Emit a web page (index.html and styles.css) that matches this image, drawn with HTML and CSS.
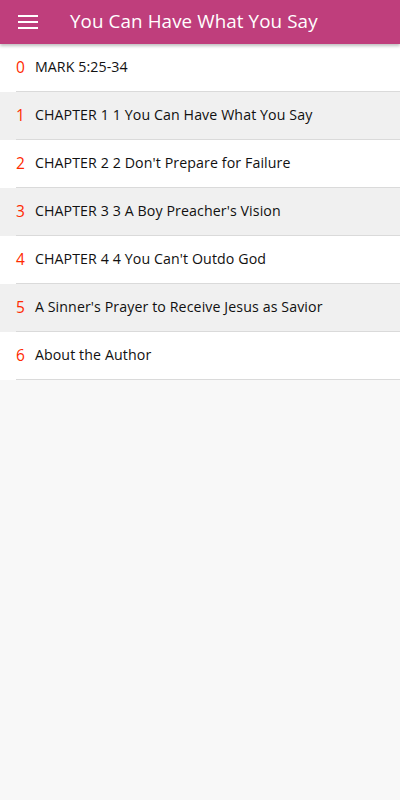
FILE: index.html
```html
<!DOCTYPE html>
<html>
<head>
<meta charset="utf-8">
<link rel="stylesheet" href="styles.css">
</head>
<body>
<header class="appbar">
  <svg class="menu" width="20" height="14" viewBox="0 0 20 14"><rect x="0" y="0" width="20" height="2" fill="#fff"/><rect x="0" y="6" width="20" height="2" fill="#fff"/><rect x="0" y="12" width="20" height="2" fill="#fff"/></svg>
  <h1 class="title">You Can Have What You Say</h1>
</header>
<ul class="list">
  <li class="row"><span class="num">0</span><span class="label">MARK 5:25-34</span></li>
  <li class="row alt"><span class="num">1</span><span class="label">CHAPTER 1 1 You Can Have What You Say</span></li>
  <li class="row"><span class="num">2</span><span class="label">CHAPTER 2 2 Don't Prepare for Failure</span></li>
  <li class="row alt"><span class="num">3</span><span class="label">CHAPTER 3 3 A Boy Preacher's Vision</span></li>
  <li class="row"><span class="num">4</span><span class="label">CHAPTER 4 4 You Can't Outdo God</span></li>
  <li class="row alt"><span class="num">5</span><span class="label">A Sinner's Prayer to Receive Jesus as Savior</span></li>
  <li class="row"><span class="num">6</span><span class="label">About the Author</span></li>
</ul>
</body>
</html>
```
FILE: styles.css
```css
html, body { margin: 0; padding: 0; }
body {
  background: #f8f8f8;
  font-family: "Open Sans", "DejaVu Sans", sans-serif;
  width: 400px;
  min-height: 800px;
}
.appbar {
  height: 44px;
  background: #bf3e7c;
  display: flex;
  align-items: center;
  box-shadow: 0 2px 3px rgba(0,0,0,0.25);
  position: relative;
  z-index: 1;
}
.menu { margin-left: 18px; }
.title {
  margin: -2px 0 0 32px;
  color: #fff;
  font-weight: 400;
  font-size: 18.8px;
  letter-spacing: 0.1px;
}
.list { list-style: none; margin: 0; padding: 0; }
.row {
  height: 48px;
  display: flex;
  align-items: center;
  background: #fff;
  position: relative;
  padding-bottom: 3px;
  box-sizing: border-box;
}
.row.alt { background: #f0f0f0; }
.row::after {
  content: "";
  position: absolute;
  left: 16px; right: 0; bottom: 0;
  height: 1px;
  background: #dadada;
}
.num {
  color: #ff2a00;
  font-size: 15.5px;
  margin-left: 16px;
  font-weight: 500;
}
.label {
  margin-left: 10px;
  font-size: 14.2px;
  color: #111;
  letter-spacing: 0.1px;
}
```
